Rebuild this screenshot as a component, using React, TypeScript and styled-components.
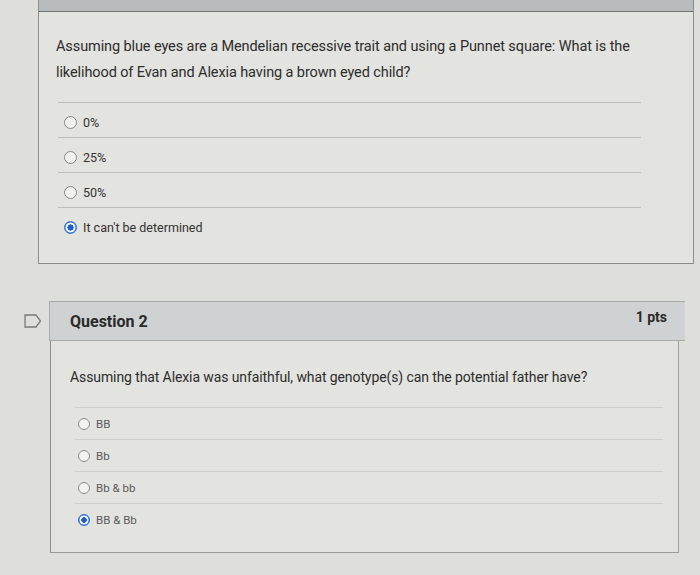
import React from "react";
import styled, { createGlobalStyle } from "styled-components";

const Global = createGlobalStyle`
  html, body { margin: 0; padding: 0; }
  body {
    background: #dededa;
    font-family: Roboto, "Liberation Sans", Arial, sans-serif;
    width: 700px;
    height: 575px;
    overflow: hidden;
  }
`;

const Page = styled.div`
  display: flex;
  flex-direction: column;
  width: 700px;
  height: 575px;
  background: #dededa;
`;

const Card = styled.section`
  margin-left: 38px;
  width: 654px;
  border-left: 1px solid #8c8c8a;
  border-bottom: 1px solid #8c8c8a;
  border-right: 1px solid #8c8c8a;
  background: #e3e3e0;
`;

const TopStrip = styled.div`
  height: 11px;
  background: #b8bcbc;
  border-bottom: 1px solid #6e7272;
`;

const Body = styled.div<{ $pad: string }>`
  padding: ${(p) => p.$pad};
`;

const QuestionText = styled.p<{ $size: number }>`
  margin: 0;
  font-size: ${(p) => p.$size}px;
  line-height: 26px;
  color: #2d2d2d;
  letter-spacing: -0.1px;
`;

const Answers = styled.div<{ $width: number; $indent: number }>`
  width: ${(p) => p.$width}px;
  margin-left: ${(p) => p.$indent}px;
  display: flex;
  flex-direction: column;
`;

const Answer = styled.label<{ $h: number; $top?: number; $muted?: boolean; $size: number }>`
  display: flex;
  align-items: ${(p) => (p.$top !== undefined ? "flex-start" : "center")};
  padding-top: ${(p) => p.$top ?? 0}px;
  box-sizing: border-box;
  gap: 6px;
  height: ${(p) => p.$h}px;
  padding-left: ${(p) => (p.$muted ? 3 : 6)}px;
  border-top: 1px solid ${(p) => (p.$muted ? "#cfcfcc" : "#bdbdba")};
  font-size: ${(p) => p.$size}px;
  line-height: 14px;
  color: ${(p) => (p.$muted ? "#5c5c5c" : "#333")};
`;

const Radio = styled.span<{ $checked?: boolean; $d: number }>`
  width: ${(p) => p.$d}px;
  height: ${(p) => p.$d}px;
  box-sizing: border-box;
  border-radius: 50%;
  flex-shrink: 0;
  border: 1px solid ${(p) => (p.$checked ? "#2b6fd6" : "#8a8a88")};
  background: ${(p) =>
    p.$checked
      ? "radial-gradient(circle, #1f5fcf 0 38%, #ffffff 42% 60%, #5a94ee 66%)"
      : "#f2f2f0"};
`;

const Spacer = styled.div<{ $h: number }>`
  height: ${(p) => p.$h}px;
  flex-shrink: 0;
`;

const QuestionRow = styled.div`
  display: flex;
  align-items: flex-start;
`;

const FlagCol = styled.div`
  width: 49px;
  display: flex;
  justify-content: flex-end;
  padding-right: 7px;
  box-sizing: border-box;
  padding-top: 13px;
`;

const Card2 = styled.section`
  width: 636px;
  display: flex;
  flex-direction: column;
`;

const Header = styled.header`
  height: 40px;
  box-sizing: border-box;
  display: flex;
  align-items: center;
  justify-content: space-between;
  padding: 0 18px 0 20px;
  background: #cfd2d2;
  border: 1px solid #a7aaaa;
  border-right: none;
`;

const Title = styled.h2`
  margin: 0;
  font-size: 16px;
  font-weight: 700;
  color: #2a2a2a;
`;

const Pts = styled.span`
  font-size: 14px;
  font-weight: 700;
  color: #2a2a2a;
  margin-top: -8px;
`;

const Body2 = styled.div`
  width: 629px;
  height: 212px;
  box-sizing: border-box;
  margin-left: 1px;
  border-left: 1px solid #8c8c8a;
  border-bottom: 1px solid #9a9a98;
  border-right: 1px solid #a0a09e;
  background: #e3e3e0;
  padding: 23px 0 0 19px;
`;

const Flag = () => (
  <svg width="18" height="14" viewBox="0 0 18 14">
    <path d="M1 1 H12 L16.5 7 L12 13 H1 Z" fill="none" stroke="#7a7a7a" strokeWidth="1.3" />
  </svg>
);

export default function App() {
  const a1 = ["0%", "25%", "50%", "It can't be determined"];
  const a2 = ["BB", "Bb", "Bb & bb", "BB & Bb"];
  return (
    <Page>
      <Global />
      <Card>
        <TopStrip />
        <Body $pad="22px 0 0 17px">
          <QuestionText $size={14.5}>
            Assuming blue eyes are a Mendelian recessive trait and using a Punnet square: What is the
            likelihood of Evan and Alexia having a brown eyed child?
          </QuestionText>
          <Spacer $h={16} />
          <Answers $width={583} $indent={2}>
            {a1.map((t, i) => (
              <Answer key={t} $h={i === 3 ? 56 : 35} $top={13} $size={12.5}>
                <Radio $d={13} $checked={i === 3} />
                {t}
              </Answer>
            ))}
          </Answers>
        </Body>
      </Card>
      <Spacer $h={37} />
      <QuestionRow>
        <FlagCol>
          <Flag />
        </FlagCol>
        <Card2>
          <Header>
            <Title>Question 2</Title>
            <Pts>1 pts</Pts>
          </Header>
          <Body2>
            <QuestionText $size={14}>
              Assuming that Alexia was unfaithful, what genotype(s) can the potential father have?
            </QuestionText>
            <Spacer $h={17} />
            <Answers $width={588} $indent={5}>
              {a2.map((t, i) => (
                <Answer key={t} $h={32} $muted $size={11.5}>
                  <Radio $d={12} $checked={i === 3} />
                  {t}
                </Answer>
              ))}
            </Answers>
          </Body2>
        </Card2>
      </QuestionRow>
    </Page>
  );
}
